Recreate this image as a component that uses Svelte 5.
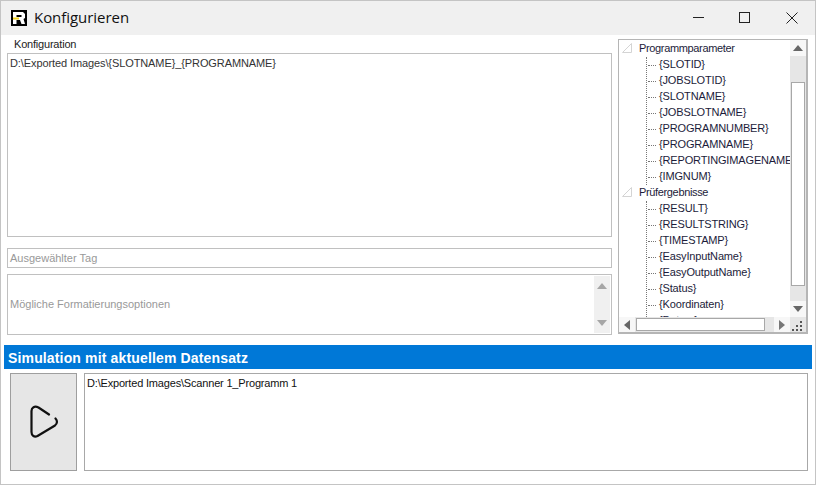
<script>
	const groups = [
		{
			title: 'Programmparameter',
			tags: ['{SLOTID}', '{JOBSLOTID}', '{SLOTNAME}', '{JOBSLOTNAME}', '{PROGRAMNUMBER}', '{PROGRAMNAME}', '{REPORTINGIMAGENAME}', '{IMGNUM}']
		},
		{
			title: 'Prüfergebnisse',
			tags: ['{RESULT}', '{RESULTSTRING}', '{TIMESTAMP}', '{EasyInputName}', '{EasyOutputName}', '{Status}', '{Koordinaten}', '{Datum}']
		}
	];
</script>

<div class="window">
	<header class="titlebar">
		<svg class="logo" width="16" height="16" viewBox="0 0 16 16">
			<rect width="16" height="16" fill="#000" />
			<path d="M2 2h10l2 2v4l-1.500 1 1.500 5h-3.500L9 10H5.500v4H2z" fill="#fff" />
			<rect x="5.500" y="5" width="5" height="2" fill="#000" />
			<rect x="2" y="7.500" width="6" height="2" fill="#f2d21c" />
		</svg>
		<span class="title">Konfigurieren</span>
		<div class="controls">
			<div class="ctl"><svg width="12" height="12" viewBox="0 0 12 12"><path d="M0 5.500h11" stroke="#222" fill="none" /></svg></div>
			<div class="ctl max"><svg width="12" height="12" viewBox="0 0 12 12"><rect x="0.500" y="0.500" width="10" height="10" stroke="#222" fill="none" /></svg></div>
			<div class="ctl"><svg width="12" height="12" viewBox="0 0 12 12"><path d="M0.500 0.500l11 11M11.500 0.500l-11 11" stroke="#222" fill="none" /></svg></div>
		</div>
	</header>

	<section class="config">
		<div class="left">
			<div class="label">Konfiguration</div>
			<div class="box main">D:\Exported Images\&#123;SLOTNAME&#125;_&#123;PROGRAMNAME&#125;</div>
			<div class="box tag">Ausgewählter Tag</div>
			<div class="box options">
				<span class="hint">Mögliche Formatierungsoptionen</span>
				<div class="mini-scroll">
					<i class="up"></i>
					<i class="down"></i>
				</div>
			</div>
		</div>

		<div class="tree">
			<div class="tree-body">
				<div class="tree-view">
					{#each groups as group}
						<div class="node">
							<svg class="tri" width="12" height="12" viewBox="0 0 12 12"><path d="M10.500 1.500v9h-9z" fill="#fff" stroke="#d4d4d4" /></svg>
							{group.title}
						</div>
						<div class="children">
							{#each group.tags as tag}
								<div class="leaf">{tag}</div>
							{/each}
						</div>
					{/each}
				</div>
				<div class="vscroll">
					<button class="arrow"><i class="up dark"></i></button>
					<div class="track"><div class="thumb-v"></div></div>
					<button class="arrow"><i class="down dark"></i></button>
				</div>
			</div>
			<div class="hscroll">
				<button class="arrow-h"><i class="left-tri"></i></button>
				<div class="thumb-h"></div>
				<button class="arrow-h"><i class="right-tri"></i></button>
				<div class="grip">
					<svg width="12" height="12" viewBox="0 0 12 12" fill="#555">
						<rect x="8" y="2" width="2" height="2" /><rect x="4" y="6" width="2" height="2" /><rect x="8" y="6" width="2" height="2" />
						<rect x="0" y="10" width="2" height="2" /><rect x="4" y="10" width="2" height="2" /><rect x="8" y="10" width="2" height="2" />
					</svg>
				</div>
			</div>
		</div>
	</section>

	<div class="sim-head">Simulation mit aktuellem Datensatz</div>

	<section class="sim">
		<button class="play" aria-label="Start">
			<svg width="33" height="34" viewBox="0 0 33 34">
				<path d="M22 9.500L11.500 2.500C7.500 0.500 4.500 2.500 4.500 6V27C4.500 31 7.500 32.500 10.500 31L28 20.500C30.500 18.500 30.500 15.500 28.500 13.500" fill="none" stroke="#111" stroke-width="2.200" stroke-linecap="round" stroke-linejoin="round" />
			</svg>
		</button>
		<div class="box output">D:\Exported Images\Scanner 1_Programm 1</div>
	</section>
</div>

<style>
	:global(body) {
		margin: 0;
		background: #fff;
	}
	.window {
		width: 816px;
		height: 485px;
		box-sizing: border-box;
		border: 1px solid #c4c4c4;
		background: #fff;
		font-family: "Liberation Sans", sans-serif;
		font-size: 11px;
		color: #222;
		overflow: hidden;
	}
	.titlebar {
		height: 34px;
		background: #f0f0f0;
		display: flex;
		align-items: center;
		padding-left: 10px;
	}
	.logo {
		margin-right: 7px;
	}
	.title {
		font-family: "Open Sans", sans-serif;
		font-size: 15px;
		letter-spacing: -0.05px;
		color: #111;
		margin-bottom: 2px;
	}
	.controls {
		margin-left: auto;
		display: flex;
		align-items: center;
	}
	.ctl {
		width: 46px;
		display: flex;
		justify-content: center;
	}
	.ctl.max {
		margin-right: 1px;
	}
	.config {
		display: flex;
		padding: 4px 7px 0 6px;
		gap: 6px;
		height: 300px;
		box-sizing: border-box;
	}
	.left {
		width: 605px;
		display: flex;
		flex-direction: column;
	}
	.label {
		height: 14px;
		line-height: 11px;
		padding-left: 7px;
		letter-spacing: -0.2px;
		color: #222;
	}
	.box {
		box-sizing: border-box;
		border: 1px solid #c0c0c0;
		background: #fff;
	}
	.main {
		height: 184px;
		padding: 3px 2px;
		line-height: 13px;
		letter-spacing: -0.1px;
		color: #333;
	}
	.tag {
		height: 20px;
		margin-top: 11px;
		line-height: 18px;
		padding-left: 2px;
		color: #999;
	}
	.options {
		height: 61px;
		margin-top: 6px;
		display: flex;
		align-items: center;
		justify-content: space-between;
		padding-left: 2px;
		color: #999;
	}
	.hint {
		margin-bottom: 2px;
	}
	.mini-scroll {
		width: 16px;
		height: 57px;
		margin-right: 1px;
		background: #f0f0f0;
		display: flex;
		flex-direction: column;
		justify-content: space-between;
		align-items: center;
		padding: 7px 0;
		box-sizing: border-box;
	}
	.up, .down {
		display: block;
		width: 0;
		height: 0;
		border-left: 5px solid transparent;
		border-right: 5px solid transparent;
	}
	.up {
		border-bottom: 6px solid #a6a6a6;
	}
	.down {
		border-top: 6px solid #a6a6a6;
	}
	.up.dark {
		border-bottom-color: #666;
	}
	.down.dark {
		border-top-color: #666;
	}
	.tree {
		width: 190px;
		height: 295px;
		box-sizing: border-box;
		border: 2px solid #b5b5b5;
		border-width: 1px 2px 2px 1px;
		display: flex;
		flex-direction: column;
		background: #fff;
	}
	.tree-body {
		flex: 1;
		display: flex;
		min-height: 0;
	}
	.tree-view {
		flex: 1;
		overflow: hidden;
		padding-top: 1px;
		white-space: nowrap;
		color: #1c1c3a;
		min-width: 0;
	}
	.node {
		height: 16px;
		line-height: 14px;
		padding-left: 20px;
		position: relative;
		letter-spacing: -0.35px;
	}
	.tri {
		position: absolute;
		left: 2px;
		top: 1px;
	}
	.children {
		margin-left: 27px;
		border-left: 1px dotted #777;
	}
	.leaf {
		height: 16px;
		line-height: 14px;
		padding-left: 12px;
		position: relative;
		letter-spacing: -0.15px;
	}
	.leaf::before {
		content: "";
		position: absolute;
		left: 1px;
		top: 8px;
		width: 8px;
		border-top: 1px dotted #777;
	}
	.vscroll {
		width: 16px;
		background: #e6e6e6;
		display: flex;
		flex-direction: column;
		flex-shrink: 0;
	}
	.arrow, .arrow-h {
		border: 0;
		padding: 0;
		background: #f7f7f7;
		display: flex;
		align-items: center;
		justify-content: center;
	}
	.arrow {
		height: 16px;
		width: 16px;
	}
	.track {
		flex: 1;
		padding: 26px 1px 0;
	}
	.thumb-v {
		height: 204px;
		box-sizing: border-box;
		background: #fff;
		border: 1px solid #a8a8a8;
	}
	.hscroll {
		height: 15px;
		background: #e6e6e6;
		display: flex;
		align-items: stretch;
		flex-shrink: 0;
	}
	.arrow-h {
		width: 16px;
	}
	.left-tri, .right-tri {
		display: block;
		width: 0;
		height: 0;
		border-top: 5px solid transparent;
		border-bottom: 5px solid transparent;
	}
	.left-tri {
		border-right: 6px solid #666;
	}
	.right-tri {
		border-left: 6px solid #777;
	}
	.thumb-h {
		width: 130px;
		margin: 1px 0 1px 1px;
		box-sizing: border-box;
		background: #fff;
		border: 1px solid #a8a8a8;
	}
	.thumb-h + .arrow-h {
		margin-left: 9px;
	}
	.grip {
		margin-left: auto;
		width: 16px;
		display: flex;
		align-items: center;
		justify-content: center;
	}
	.sim-head {
		margin: 10px 3px 0;
		height: 24px;
		background: #0078d7;
		color: #fff;
		font-size: 14px;
		font-weight: bold;
		letter-spacing: 0.15px;
		line-height: 26px;
		padding-left: 4px;
	}
	.sim {
		display: flex;
		gap: 7px;
		margin: 4px 7px 0 9px;
	}
	.play {
		width: 67px;
		height: 98px;
		box-sizing: border-box;
		background: #e6e6e6;
		border: 1px solid #9e9e9e;
		padding: 0;
		display: flex;
		align-items: center;
		justify-content: center;
	}
	.output {
		flex: 1;
		height: 98px;
		border-color: #a8a8a8;
		padding: 3px 2px;
		line-height: 13px;
		letter-spacing: -0.18px;
		color: #111;
	}
</style>
